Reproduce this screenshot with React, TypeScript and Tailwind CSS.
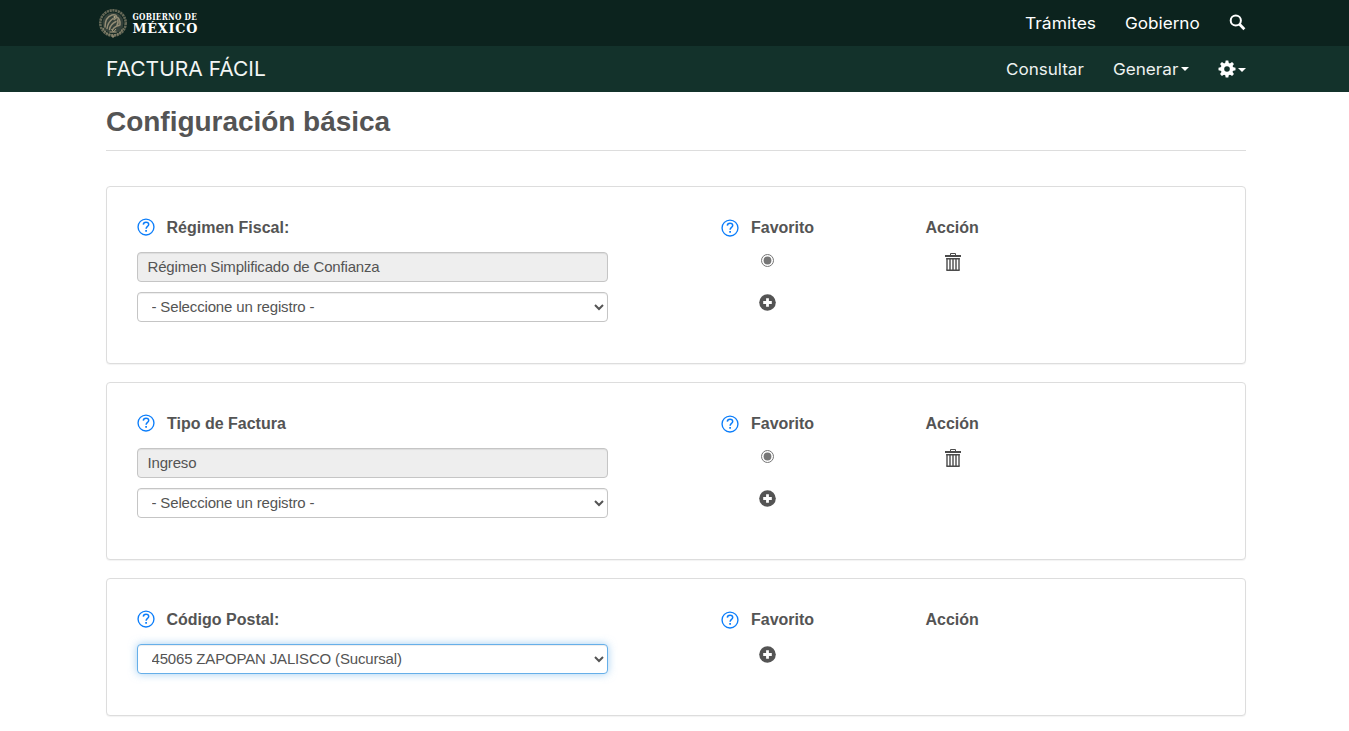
import React from "react";

const Emblem = () => (
  <svg width="29" height="31" viewBox="0 0 29 31" fill="none" className="block shrink-0">
    <circle cx="14" cy="15" r="12.7" stroke="#8d8871" strokeWidth="2.6" strokeDasharray="2.2 0.6" opacity="0.7" />
    <circle cx="14" cy="15" r="10.6" fill="#34413a" />
    <path d="M6 19c0-6 2.500-10.500 7-12 3-.8 5 .6 4.500 2.400-.3 1.100-1.800 1.300-2.500 2.100M8 20.500c.6-4.500 2.500-7.500 6-10M10.500 21.500c.4-3.500 2.500-6 6.500-8M13.500 22c1.500-3 3.500-4 6.500-4.500M17 8.500c3 1.500 4.500 4.500 4 8.500M18.500 12c1 2 .8 3.500-.5 5" stroke="#948d75" strokeWidth="1.500" strokeLinecap="round" />
    <path d="M4 20c1.500 4 5 7 10 7s8.500-3 10-7" stroke="#827f69" strokeWidth="1.800" strokeDasharray="2 .8" />
    <path d="M10.500 24h7M12.500 21l2 3 2.500-3" stroke="#a29a7c" strokeWidth="1" />
    <circle cx="15.500" cy="9" r="1" fill="#b7ae8e" />
    <circle cx="14" cy="28.500" r="1.200" fill="#8d8871" />
  </svg>
);

const Logo = () => (
  <div className="flex items-center">
    <Emblem />
    <svg width="76" height="40" viewBox="0 -5 76 40" className="block overflow-visible" fill="#fff" fontFamily="'DejaVu Serif', serif" fontWeight="700">
      <text x="4.500" y="11.800" fontSize="8.400" letterSpacing="0.300" textLength="64.500" lengthAdjust="spacingAndGlyphs">GOBIERNO DE</text>
      <text x="4.500" y="25.300" fontSize="13.500" letterSpacing="0.800" textLength="65.500" lengthAdjust="spacingAndGlyphs">MÉXICO</text>
    </svg>
  </div>
);

const Search = () => (
  <svg width="17" height="17" viewBox="0 0 17 17" fill="none" stroke="#fff" className="block">
    <circle cx="6.800" cy="6.500" r="5.100" strokeWidth="2" />
    <path d="M10.500 10.300L15.400 15.200" strokeWidth="2.800" />
  </svg>
);

const Gear = () => (
  <svg width="18" height="18" viewBox="-9 -9 18 18" className="block">
    <g fill="#fff">
      {[0, 45, 90, 135].map((a) => (
        <path key={a} d="M-1.900 -5.500L-1.300 -8.500H1.300L1.900 -5.500V5.500L1.300 8.500H-1.300L-1.900 5.500Z" transform={`rotate(${a})`} />
      ))}
      <circle r="6.300" />
    </g>
    <circle r="2.800" fill="#13322b" />
  </svg>
);

const Caret = () => (
  <span className="block h-0 w-0 border-x-4 border-t-4 border-x-transparent border-t-white" />
);

const Help = () => (
  <svg width="18" height="18" viewBox="0 0 18 18" fill="none" stroke="#0b7dfa" className="block shrink-0">
    <circle cx="9" cy="9" r="7.950" strokeWidth="1.350" />
    <path d="M6.300 6.600C6.400 4.900 7.500 4.200 9 4.200c1.600 0 2.700.8 2.700 2.200 0 2-2.600 2-2.600 4.300" strokeWidth="1.500" />
    <path d="M9.100 12v1.700" strokeWidth="1.700" />
  </svg>
);

const Plus = () => (
  <svg width="17" height="17" viewBox="0 0 17 17" className="block">
    <circle cx="8.500" cy="8.500" r="8.300" fill="#545454" />
    <path d="M8.500 4.200v8.600M4.200 8.500h8.600" stroke="#fff" strokeWidth="2.800" />
  </svg>
);

const Trash = () => (
  <svg width="16" height="18" viewBox="0 0 16 18" fill="none" stroke="#4b4b4b" className="block">
    <path d="M5.500 2.500v-2h5v2" strokeWidth="1" />
    <path d="M0 3h16" strokeWidth="2" />
    <path d="M2 5v12M14 5v12" strokeWidth="1.400" />
    <path d="M1.300 5.700h13.400M1.300 17.200h13.400" strokeWidth="1.500" />
    <path d="M5 6v11M8 6v11M11 6v11" strokeWidth="1.400" />
  </svg>
);

const Radio = () => (
  <svg width="13" height="13" viewBox="0 0 13 13" className="block">
    <circle cx="6.500" cy="6.500" r="6" fill="#fff" stroke="#767676" />
    <circle cx="6.500" cy="6.500" r="3.900" fill="#767676" />
  </svg>
);

type CardProps = {
  label: string;
  value?: string;
  option: string;
  focused?: boolean;
  labelGap?: string;
  optionSpacing?: string;
};

function Card({ label, value, option, focused = false, labelGap = "gap-[11.500px]", optionSpacing = "tracking-[-0.150px]" }: CardProps) {
  return (
    <section className={`flex rounded-[4px] border border-[#ddd] bg-white px-[30px] pt-[30px] shadow-[0_1px_1px_rgba(0,0,0,0.05)] ${value ? "h-[178px]" : "h-[138px]"}`}>
      <div className="w-[471px]">
        <div className={`flex h-5 items-center ${labelGap}`}>
          <Help />
          <span className="pt-[2px] text-[16px] font-bold leading-5">{label}</span>
        </div>
        <div className="mt-[15px] flex flex-col gap-[10px]">
          {value && (
            <div className="h-[30px] rounded-[4px] border border-[#c5c5c5] bg-[#eee] px-[9.500px] text-[15px] leading-7 tracking-[-0.170px] shadow-[inset_0_1px_1px_rgba(0,0,0,0.075)]">
              {value}
            </div>
          )}
          <select
            className={`h-[30px] w-full rounded-[4px] border bg-white pl-[9.500px] pr-[9px] pb-[2px] text-[15px] text-[#545454] outline-none ${optionSpacing} ${
              focused
                ? "border-[#66afe9] shadow-[inset_0_1px_1px_rgba(0,0,0,0.075),0_0_8px_rgba(102,175,233,0.6)]"
                : "border-[#c5c5c5] shadow-[inset_0_1px_1px_rgba(0,0,0,0.075)]"
            }`}
          >
            <option>{option}</option>
          </select>
        </div>
      </div>
      <div className="ml-[113px] w-[204.500px]">
        <div className="flex h-5 items-center gap-3">
          <div className="pt-[2px]"><Help /></div>
          <span className="pt-[2px] text-[16px] font-bold leading-5">Favorito</span>
        </div>
        <div className="flex w-[93px] flex-col items-center">
          {value && <div className="mt-[17px] h-[23px]"><Radio /></div>}
          <div className="mt-[17px]"><Plus /></div>
        </div>
      </div>
      <div>
        <div className="pt-px text-[16px] font-bold leading-5">Acción</div>
        {value && <div className="mt-[15px] flex justify-center pl-[2px]"><Trash /></div>}
      </div>
    </section>
  );
}

export default function App() {
  return (
    <div className="h-[731px] w-[1349px] overflow-hidden bg-white font-['Liberation_Sans',Arial,sans-serif] text-[#545454]">
      <header className="font-[Inter,sans-serif] text-white">
        <div className="flex h-[46px] items-center justify-between bg-[#0c231e] pl-[99px] pr-[103px]">
          <Logo />
          <nav className="flex items-center text-[16px]">
            <a className="w-[100px] origin-left scale-x-[1.090]">Trámites</a>
            <a className="w-[104px] origin-left scale-x-[1.070]">Gobierno</a>
            <div className="-mt-[2px]"><Search /></div>
          </nav>
        </div>
        <div className="flex h-[46px] items-center justify-between bg-[#13322b] pl-[105.500px] pr-[103px]">
          <div className="-mt-px origin-left scale-x-[1.050] text-[20px] text-[#f2f5f4]">FACTURA FÁCIL</div>
          <nav className="flex items-center text-[16px] text-[#eef2f1]">
            <a className="w-[107px] origin-left scale-x-[1.065]">Consultar</a>
            <div className="flex w-[105px] items-center">
              <a className="w-[68px] origin-left scale-x-[1.070]">Generar</a>
              <Caret />
            </div>
            <div className="flex items-center gap-[2px]"><Gear /><div className="pt-px"><Caret /></div></div>
          </nav>
        </div>
      </header>
      <main className="ml-[106px] w-[1140px]">
        <div className="h-[59px] border-b border-[#ddd] pt-[13px]">
          <h1 className="text-[28px] font-bold leading-[34px] tracking-[-0.030px]">Configuración básica</h1>
        </div>
        <div className="mt-[35px] flex flex-col gap-[18px]">
          <Card label="Régimen Fiscal:" value="Régimen Simplificado de Confianza" option="- Seleccione un registro -" />
          <Card label="Tipo de Factura" value="Ingreso" option="- Seleccione un registro -" labelGap="gap-3" />
          <Card label="Código Postal:" option="45065 ZAPOPAN JALISCO (Sucursal)" focused optionSpacing="tracking-[-0.170px]" />
        </div>
      </main>
    </div>
  );
}
